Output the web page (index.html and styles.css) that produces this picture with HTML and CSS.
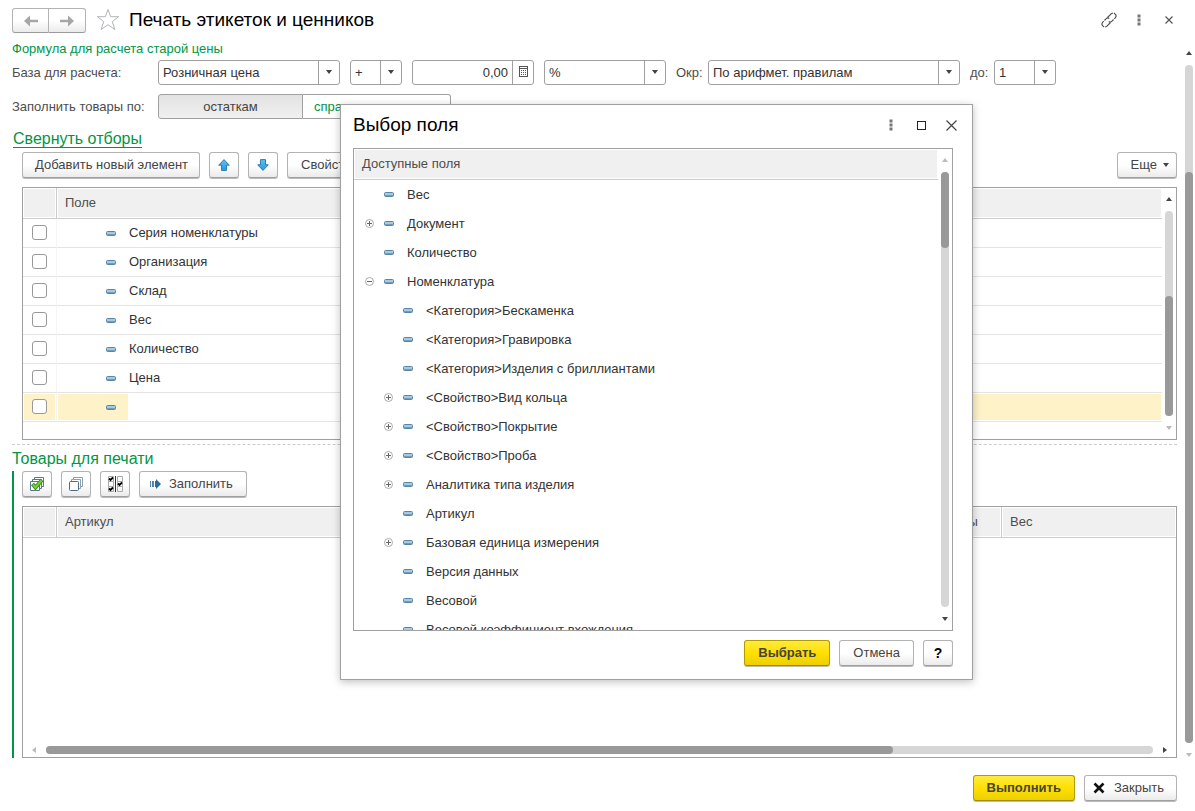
FILE: index.html
```html
<!DOCTYPE html>
<html lang="ru">
<head>
<meta charset="utf-8">
<meta name="viewport" content="width=device-width, initial-scale=1">
<title>Печать этикеток и ценников</title>
<link rel="stylesheet" href="styles.css">
</head>
<body>
<svg class="defs" aria-hidden="true">
  <defs>
    <linearGradient id="blue" x1="0" y1="0" x2="0" y2="1"><stop offset="0" stop-color="#5fc0f5"/><stop offset="1" stop-color="#2c97dc"/></linearGradient>
    <symbol id="dash" viewBox="0 0 10 5"><rect x=".5" y=".5" width="9" height="4" rx="1" fill="#a9c9de" stroke="#5a86a6"/><path d="M1 3.500h8" stroke="#6f9cbc"/></symbol>
    <symbol id="plus" viewBox="0 0 9 9"><circle cx="4.500" cy="4.500" r="4" fill="#fff" stroke="#aaa"/><path d="M2 4.500h5M4.500 2v5" stroke="#666"/></symbol>
    <symbol id="minus" viewBox="0 0 9 9"><circle cx="4.500" cy="4.500" r="4" fill="#fff" stroke="#aaa"/><path d="M2 4.500h5" stroke="#666"/></symbol>
    <symbol id="caret" viewBox="0 0 6 4"><path d="M0 0h6L3 4z" fill="currentColor"/></symbol>
    <symbol id="up" viewBox="0 0 6 4"><path d="M0 4h6L3 0z" fill="currentColor"/></symbol>
    <symbol id="dots" viewBox="0 0 4 12"><path d="M.5 .5h3v3h-3zM.5 4.500h3v3h-3zM.5 8.500h3v3h-3z" fill="#777"/></symbol>
  </defs>
</svg>

<header class="top">
  <div class="nav">
    <button type="button" aria-label="Назад"><svg width="14" height="12" viewBox="0 0 14 12"><path d="M0 6l6-5.500V4.700h8v2.600H6v4.200z" fill="#a6a6a6"/></svg></button>
    <button type="button" aria-label="Вперед"><svg width="14" height="12" viewBox="0 0 14 12"><path d="M14 6L8 .5v4.200H0v2.600h8v4.200z" fill="#a6a6a6"/></svg></button>
  </div>
  <button type="button" class="bare star" aria-label="В избранное"><svg width="24" height="23" viewBox="0 0 24 23"><path d="M12 1.500l2.700 7.200h8l-6.400 4.900 2.500 7.900-6.800-4.800-6.800 4.800 2.500-7.900-6.400-4.900h8z" fill="#fff" stroke="#b0b5ba"/></svg></button>
  <h1>Печать этикеток и ценников</h1>
  <button type="button" class="bare tool" aria-label="Получить ссылку"><svg width="16" height="16" viewBox="0 0 16 16" fill="none" stroke="#555" stroke-width="1.200"><path d="M6.500 5.500l3.600-3.600c1.100-1.100 2.700-1.100 3.700-.1l.4.400c1 1 1 2.600 0 3.700L11 9.100c-1 1-2.300 1.100-3.300.5M9.500 10.500l-3.600 3.600c-1.100 1.100-2.700 1.100-3.700.1l-.4-.4c-1-1-1-2.600 0-3.700L5 6.900c1-1 2.300-1.100 3.300-.5" stroke-dasharray="7 1"/></svg></button>
  <button type="button" class="bare tool" aria-label="Меню"><svg width="4" height="12"><use href="#dots"/></svg></button>
  <button type="button" class="bare tool" aria-label="Закрыть окно"><svg width="8" height="8" viewBox="0 0 8 8"><path d="M.5 .5l7 7M7.500 .5l-7 7" stroke="#555" stroke-width="1.200"/></svg></button>
</header>

<main class="work">
  <form class="form">
    <h2 class="formula">Формула для расчета старой цены</h2>
    <div class="line">
      <label class="lead" for="base">База для расчета:</label>
      <div class="combo w-base"><select id="base"><option>Розничная цена</option></select><span class="drop"><svg width="6" height="4"><use href="#caret"/></svg></span></div>
      <div class="combo w-sign"><select aria-label="Знак"><option>+</option></select><span class="drop"><svg width="6" height="4"><use href="#caret"/></svg></span></div>
      <div class="combo w-sum"><input type="text" value="0,00" aria-label="Значение"><button type="button" class="drop" aria-label="Калькулятор"><svg width="9" height="11" viewBox="0 0 9 11"><rect x=".5" y=".5" width="8" height="10" fill="#fff" stroke="#555"/><path d="M1 2.500h7" stroke="#555"/><path d="M2 4.500h5M2 6.500h5M2 8.500h5" stroke="#555" stroke-dasharray="1 1"/></svg></button></div>
      <div class="combo w-unit"><select aria-label="Единица"><option>%</option></select><span class="drop"><svg width="6" height="4"><use href="#caret"/></svg></span></div>
      <label class="small" for="round">Окр:</label>
      <div class="combo w-round"><select id="round"><option>По арифмет. правилам</option></select><span class="drop"><svg width="6" height="4"><use href="#caret"/></svg></span></div>
      <label class="small to" for="upto">до:</label>
      <div class="combo w-upto"><select id="upto"><option>1</option></select><span class="drop"><svg width="6" height="4"><use href="#caret"/></svg></span></div>
    </div>
    <div class="line">
      <span class="lead">Заполнить товары по:</span>
      <div class="switch"><button type="button" class="on" aria-pressed="true">остаткам</button><button type="button" aria-pressed="false">справочнику</button></div>
    </div>
    <a class="fold" href="#filters">Свернуть отборы</a>

    <section class="filters" id="filters">
      <div class="bar">
        <button type="button" class="btn">Добавить новый элемент</button>
        <button type="button" class="btn square" aria-label="Вверх"><svg width="12" height="12" viewBox="0 0 12 12"><path d="M6 .6l5.300 5.600H8.500v5.200h-5V6.200H.7z" fill="url(#blue)" stroke="#2d7db5"/></svg></button>
        <button type="button" class="btn square" aria-label="Вниз"><svg width="12" height="12" viewBox="0 0 12 12"><path d="M6 11.400L.7 5.800h2.800V.6h5v5.200h2.800z" fill="url(#blue)" stroke="#2d7db5"/></svg></button>
        <button type="button" class="btn roomy">Свойства</button>
        <button type="button" class="btn more">Еще <svg width="6" height="4"><use href="#caret"/></svg></button>
      </div>
      <div class="box conditions">
        <div class="pane">
          <table>
            <colgroup><col class="c-check"><col class="c-field"><col></colgroup>
            <thead><tr><th></th><th>Поле</th><th></th></tr></thead>
            <tbody>
              <tr><td><input type="checkbox" aria-label="Серия номенклатуры"></td><td><div class="item"><svg width="10" height="5"><use href="#dash"/></svg>Серия номенклатуры</div></td><td></td></tr>
              <tr><td><input type="checkbox" aria-label="Организация"></td><td><div class="item"><svg width="10" height="5"><use href="#dash"/></svg>Организация</div></td><td></td></tr>
              <tr><td><input type="checkbox" aria-label="Склад"></td><td><div class="item"><svg width="10" height="5"><use href="#dash"/></svg>Склад</div></td><td></td></tr>
              <tr><td><input type="checkbox" aria-label="Вес"></td><td><div class="item"><svg width="10" height="5"><use href="#dash"/></svg>Вес</div></td><td></td></tr>
              <tr><td><input type="checkbox" aria-label="Количество"></td><td><div class="item"><svg width="10" height="5"><use href="#dash"/></svg>Количество</div></td><td></td></tr>
              <tr><td><input type="checkbox" aria-label="Цена"></td><td><div class="item"><svg width="10" height="5"><use href="#dash"/></svg>Цена</div></td><td></td></tr>
              <tr class="current"><td><input type="checkbox" aria-label="Новый элемент"></td><td><div class="item"><svg width="10" height="5"><use href="#dash"/></svg><input type="text" aria-label="Поле отбора"></div></td><td></td></tr>
            </tbody>
          </table>
        </div>
        <div class="scroll" aria-hidden="true">
          <svg width="6" height="4"><use href="#up"/></svg>
          <div class="track"><span style="flex-grow:85"></span><i style="flex-grow:120"></i></div>
          <svg class="off" width="6" height="4"><use href="#caret"/></svg>
        </div>
      </div>
    </section>

    <h2 class="goods-title">Товары для печати</h2>
    <section class="goods">
      <div class="bar">
        <button type="button" class="btn square" aria-label="Отметить все"><svg width="16" height="16" viewBox="0 0 16 16"><g fill="#fff" stroke="#56788f"><path d="M5.500 1.500h9v9h-9z"/><path d="M3.500 3.500h9v9h-9z"/><path d="M1.500 5.500h9v9h-9z"/></g><path d="M3.500 8l3 3.500L13 4" fill="none" stroke="#3c8a1c" stroke-width="4"/><path d="M4 8.500l2.500 3L12.500 4.500" fill="none" stroke="#76d13c" stroke-width="2"/></svg></button>
        <button type="button" class="btn square" aria-label="Снять отметки"><svg width="16" height="16" viewBox="0 0 16 16" fill="#fff"><path d="M5.500 1.500h9v9h-9z" stroke="#8aa0b0"/><path d="M3.500 3.500h9v9h-9z" stroke="#8aa0b0"/><rect x="1.500" y="5.500" width="9" height="9" rx="1" stroke="#4a6b85"/></svg></button>
        <button type="button" class="btn square" aria-label="Инвертировать отметки"><svg width="16" height="16" viewBox="0 0 16 16" fill="none"><path d="M1.500 .5h5v5h-5zM1.500 5.500h5v5h-5zM1.500 10.500h5v5h-5zM10.500 .5h5v5h-5zM10.500 5.500h5v5h-5zM10.500 10.500h5v5h-5z" stroke="#aaa"/><path d="M8.500 0v16" stroke="#333"/><path d="M2 2.500l1.500 1.500L6 1.500M2 12.500l1.500 1.500L6 11.500M11 7.500L12.500 9l2.500-2.500" stroke="#000" stroke-width="1.800"/></svg></button>
        <button type="button" class="btn fill"><svg width="11" height="10" viewBox="0 0 11 10"><path d="M0 2h1v6H0zM2 2h2v6H2z" fill="#4f83ab"/><path d="M5 2h1V0l5 5-5 5V8H5z" fill="#2d6a9a"/></svg>Заполнить</button>
      </div>
      <div class="box products">
        <table>
          <colgroup><col class="c-check"><col><col class="c-unit"><col class="c-weight"></colgroup>
          <thead><tr><th></th><th>Артикул</th><th>Единицы</th><th>Вес</th></tr></thead>
        </table>
        <div class="scroll across" aria-hidden="true">
          <svg class="off" width="4" height="6" viewBox="0 0 4 6"><path d="M4 0v6L0 3z" fill="currentColor"/></svg>
          <div class="track"><i style="flex-grow:847"></i><span style="flex-grow:260"></span></div>
          <svg width="4" height="6" viewBox="0 0 4 6"><path d="M0 0v6l4-3z" fill="currentColor"/></svg>
        </div>
      </div>
    </section>
  </form>
  <div class="scroll page" aria-hidden="true">
    <svg width="6" height="4"><use href="#up"/></svg>
    <div class="track"><span style="flex-grow:107"></span><i style="flex-grow:571"></i></div>
    <svg class="off" width="6" height="4"><use href="#caret"/></svg>
  </div>
</main>

<footer class="actions">
  <button type="button" class="btn main">Выполнить</button>
  <button type="button" class="btn close"><svg width="12" height="12" viewBox="0 0 12 12"><path d="M1.500 1.500l9 9M10.500 1.500l-9 9" stroke="#111" stroke-width="2.600"/></svg>Закрыть</button>
</footer>

<div class="dialog" role="dialog" aria-labelledby="pick">
  <div class="caption">
    <h2 id="pick">Выбор поля</h2>
    <button type="button" class="bare tool" aria-label="Меню диалога"><svg width="4" height="12"><use href="#dots"/></svg></button>
    <button type="button" class="bare tool" aria-label="Развернуть"><svg width="9" height="9" viewBox="0 0 9 9"><rect x=".5" y=".5" width="8" height="8" fill="none" stroke="#222"/></svg></button>
    <button type="button" class="bare tool" aria-label="Закрыть диалог"><svg width="11" height="11" viewBox="0 0 11 11"><path d="M.5 .5l10 10M10.500 .5l-10 10" stroke="#444" stroke-width="1.200"/></svg></button>
  </div>
  <div class="box picker">
    <div class="pane">
      <div class="head">Доступные поля</div>
      <ul class="tree">
        <li><div class="node"><svg width="10" height="5"><use href="#dash"/></svg><span>Вес</span></div></li>
        <li><div class="node"><button type="button" class="bare" aria-label="Развернуть Документ"><svg width="9" height="9"><use href="#plus"/></svg></button><svg width="10" height="5"><use href="#dash"/></svg><span>Документ</span></div></li>
        <li><div class="node"><svg width="10" height="5"><use href="#dash"/></svg><span>Количество</span></div></li>
        <li><div class="node"><button type="button" class="bare" aria-label="Свернуть Номенклатура"><svg width="9" height="9"><use href="#minus"/></svg></button><svg width="10" height="5"><use href="#dash"/></svg><span>Номенклатура</span></div>
          <ul>
            <li><div class="node"><svg width="10" height="5"><use href="#dash"/></svg><span>&lt;Категория&gt;Бескаменка</span></div></li>
            <li><div class="node"><svg width="10" height="5"><use href="#dash"/></svg><span>&lt;Категория&gt;Гравировка</span></div></li>
            <li><div class="node"><svg width="10" height="5"><use href="#dash"/></svg><span>&lt;Категория&gt;Изделия с бриллиантами</span></div></li>
            <li><div class="node"><button type="button" class="bare" aria-label="Развернуть Вид кольца"><svg width="9" height="9"><use href="#plus"/></svg></button><svg width="10" height="5"><use href="#dash"/></svg><span>&lt;Свойство&gt;Вид кольца</span></div></li>
            <li><div class="node"><button type="button" class="bare" aria-label="Развернуть Покрытие"><svg width="9" height="9"><use href="#plus"/></svg></button><svg width="10" height="5"><use href="#dash"/></svg><span>&lt;Свойство&gt;Покрытие</span></div></li>
            <li><div class="node"><button type="button" class="bare" aria-label="Развернуть Проба"><svg width="9" height="9"><use href="#plus"/></svg></button><svg width="10" height="5"><use href="#dash"/></svg><span>&lt;Свойство&gt;Проба</span></div></li>
            <li><div class="node"><button type="button" class="bare" aria-label="Развернуть Аналитика"><svg width="9" height="9"><use href="#plus"/></svg></button><svg width="10" height="5"><use href="#dash"/></svg><span>Аналитика типа изделия</span></div></li>
            <li><div class="node"><svg width="10" height="5"><use href="#dash"/></svg><span>Артикул</span></div></li>
            <li><div class="node"><button type="button" class="bare" aria-label="Развернуть Базовая единица"><svg width="9" height="9"><use href="#plus"/></svg></button><svg width="10" height="5"><use href="#dash"/></svg><span>Базовая единица измерения</span></div></li>
            <li><div class="node"><svg width="10" height="5"><use href="#dash"/></svg><span>Версия данных</span></div></li>
            <li><div class="node"><svg width="10" height="5"><use href="#dash"/></svg><span>Весовой</span></div></li>
            <li><div class="node"><svg width="10" height="5"><use href="#dash"/></svg><span>Весовой коэффициент вхождения</span></div></li>
          </ul>
        </li>
      </ul>
    </div>
    <div class="scroll" aria-hidden="true">
      <svg class="off" width="6" height="4"><use href="#up"/></svg>
      <div class="track"><i style="flex-grow:76"></i><span style="flex-grow:359"></span></div>
      <svg width="6" height="4"><use href="#caret"/></svg>
    </div>
  </div>
  <div class="choices">
    <button type="button" class="btn main">Выбрать</button>
    <button type="button" class="btn roomy">Отмена</button>
    <button type="button" class="btn square help">?</button>
  </div>
</div>
</body>
</html>
```
FILE: styles.css
```css
* { box-sizing: border-box; }

body {
  margin: 0;
  min-height: 100vh;
  display: flex;
  flex-direction: column;
  position: relative;
  background: #fff;
  color: #333;
  font: 13px/16px "Liberation Sans", Arial, sans-serif;
}

button, input, select { font: inherit; color: inherit; margin: 0; }
h1, h2, ul { margin: 0; padding: 0; font-weight: normal; }
ul { list-style: none; }
svg { display: block; flex: none; }
.defs { position: absolute; width: 0; height: 0; }

.bare { border: 0; padding: 0; background: none; }
.tool { width: 30px; height: 24px; display: grid; place-items: center; }

/* window header */
.top { display: flex; align-items: flex-start; padding: 8px 11px 8px 12px; }
.top h1 { flex: 1; font-size: 19px; line-height: 24px; color: #000; }
.star { margin: 0 9px 0 10px; }
.nav { display: flex; }
.nav button {
  width: 37px; height: 25px; padding: 0;
  display: grid; place-items: center;
  border: 1px solid #b3b3b3; border-bottom-color: #999;
  background: linear-gradient(#fff 50%, #ebebeb);
}
.nav button:first-child { border-radius: 3px 0 0 3px; }
.nav button:last-child { border-left: 0; border-radius: 0 3px 3px 0; }

/* buttons */
.btn {
  height: 26px; margin-bottom: 1px; padding: 0 11px 0 12px;
  display: flex; align-items: center; justify-content: center;
  border: 1px solid #b3b3b3; border-bottom-color: #a0a0a0; border-radius: 3px;
  background: linear-gradient(#fff 50%, #ebebeb);
  box-shadow: 0 1px 0 #bbb;
  color: #444; white-space: nowrap;
}
.btn.roomy { padding: 0 13px; }
.btn.square { width: 30px; padding: 0; }
.btn.main {
  padding: 0 13px;
  border-color: #b09b00; border-bottom-color: #a08c00;
  background: linear-gradient(#ffea40, #ffe000 50%, #edcf00);
  font-weight: bold; color: #444;
}
.btn.help { font-weight: bold; font-size: 14px; color: #000; }
.btn.more { margin-left: auto; gap: 6px; padding: 0 7px 0 13px; }
.bar { display: flex; gap: 9px; }

/* form */
.work { flex: 1; display: flex; gap: 8px; padding: 0 2px 0 12px; }
.form { flex: 1; min-width: 0; display: flex; flex-direction: column; }
.formula { font-size: 13px; line-height: 16px; color: #009646; }
.line { display: flex; align-items: center; gap: 10px; margin-top: 3px; }
.line + .line { margin-top: 9px; }
.lead { width: 136px; color: #4d4d4d; white-space: nowrap; }
.small { width: 22px; color: #4d4d4d; }
.small.to { width: 14px; }

.combo {
  height: 25px;
  display: grid; grid-template-columns: 1fr 21px; grid-template-rows: 100%;
  border: 1px solid #a0a0a0; border-radius: 3px;
}
.combo select, .combo input {
  grid-area: 1 / 1; min-width: 0; width: 100%;
  border: 0; padding: 0 4px; background: none; appearance: none; outline: 0;
}
.combo select { grid-column: 1 / 3; }
.combo input { text-align: right; }
.combo .drop {
  grid-area: 1 / 2; padding: 0 0 2px;
  display: grid; place-items: center;
  border: 0; border-left: 1px solid #a0a0a0; background: none;
  color: #444;
}
.combo span.drop { pointer-events: none; }
.w-base { width: 182px; }
.w-sign { width: 52px; }
.w-sum, .w-unit { width: 122px; }
.w-round { width: 252px; }
.w-upto { width: 62px; }

.switch { display: flex; }
.switch button {
  width: 148px; height: 25px;
  border: 1px solid #a0a0a0; border-left: 0; border-radius: 0 3px 3px 0;
  background: #fff; color: #009646;
  text-align: left; padding: 0 11px;
}
.switch .on {
  width: 145px;
  border-left: 1px solid #a0a0a0; border-radius: 3px 0 0 3px;
  background: linear-gradient(#e2e2e2, #f0f0f0);
  color: #444; text-align: center;
}

.fold {
  align-self: flex-start; margin: 12px 0 4px 1px;
  border-bottom: 1px solid #009646;
  font-size: 16px; line-height: 16px; color: #009646; text-decoration: none;
}

/* tables */
.box { border: 1px solid #a0a0a0; }
.box table { width: 100%; border-collapse: separate; border-spacing: 0; table-layout: fixed; }
.box th, .head {
  height: 31px; padding: 0 8px;
  border-bottom: 1px solid #ccc;
  background: #f0f0f0; box-shadow: inset 0 0 0 1px #fff;
  font-weight: normal; text-align: left; color: #4d4d4d;
}
.box th { border-right: 1px solid #ccc; }
.box th:last-child { border-right: 0; }
.c-check { width: 34px; }
.c-field { width: 50%; }
.c-unit { width: 87px; }
.c-weight { width: 174px; }
.box td { height: 29px; padding: 0; border-bottom: 1px solid #e4e4e4; }
.box td:first-child { padding: 0 0 2px 9px; border-right: 1px solid #f5f5f5; }
input[type="checkbox"] {
  display: block; width: 15px; height: 15px;
  appearance: none; background: #fff;
  border: 1px solid #999; border-radius: 3px;
}
.item { height: 28px; display: flex; align-items: center; gap: 13px; padding-left: 49px; }
.item input { flex: 1; height: 28px; margin-left: -1px; border: 0; padding: 0; background: #fff; outline: 0; }
.current td { background: #fdf2c8; box-shadow: inset 0 0 0 1px #fff; }

.filters { padding: 0 0 4px 10px; border-bottom: 1px dashed #ccc; }
.conditions { display: flex; margin-top: 8px; }
.conditions .pane { padding-bottom: 17px; }
.pane { flex: 1; overflow: hidden; }

.goods-title { margin: 6px 0 4px; font-size: 16px; line-height: 16px; color: #009646; }
.goods { flex: 1; display: flex; flex-direction: column; padding-left: 8px; border-left: 2px solid #009646; }
.btn.fill { gap: 8px; padding: 0 13px 0 10px; }
.products { flex: 1; margin-top: 8px; display: flex; flex-direction: column; justify-content: space-between; }

/* scroll bars */
.scroll { width: 14px; display: flex; flex-direction: column; align-items: center; gap: 10px; padding: 9px 0; color: #444; }
.scroll .off { color: #bbb; }
.track { flex: 1; width: 8px; display: flex; flex-direction: column; border-radius: 4px; background: #d6d6d6; }
.track i { border-radius: 4px; background: #999; }
.track i, .track span { flex-basis: 0; }
.scroll.page { width: 8px; padding: 10px 0 1px; }
.scroll.across { width: auto; flex-direction: row; padding: 3px 9px; }
.across .track { width: auto; height: 8px; flex-direction: row; }

.actions { display: flex; justify-content: flex-end; gap: 9px; padding: 17px 18px 9px 12px; }
.btn.close { gap: 9px; padding: 0 12px 0 8px; }

/* field picker, floats over the form */
.dialog {
  position: absolute; left: 340px; top: 104px; width: 633px;
  padding: 8px 19px 12px 12px;
  border: 1px solid #a0a0a0; background: #fff;
  box-shadow: 0 2px 8px rgba(0, 0, 0, .25);
}
.caption { display: flex; align-items: center; margin: 0 -13px 11px 0; }
.caption h2 { flex: 1; font-size: 19px; line-height: 24px; color: #000; }
.picker { height: 483px; display: flex; }
.head { display: flex; align-items: center; }
.tree { padding-left: 11px; }
.tree ul { padding-left: 19px; }
.node { height: 29px; display: grid; grid-template-columns: 9px 10px 1fr; column-gap: 10px; align-items: center; white-space: nowrap; }
.node > svg { grid-column: 2; }
.node > span { padding-left: 3px; }
.choices { display: flex; justify-content: flex-end; gap: 9px; margin-top: 9px; }
```
